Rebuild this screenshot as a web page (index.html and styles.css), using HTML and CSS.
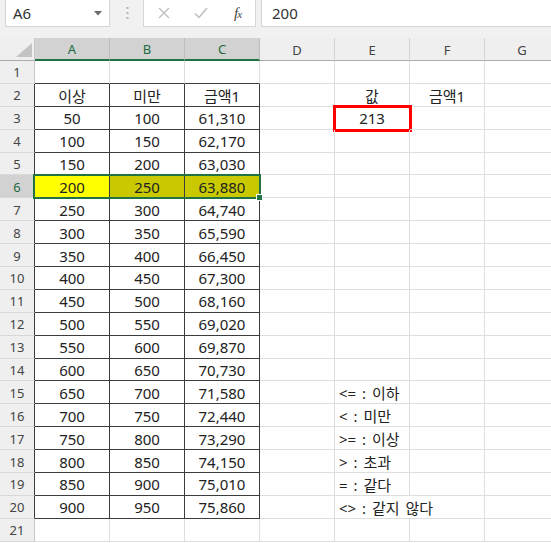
FILE: index.html
```html
<!DOCTYPE html>
<html lang="ko">
<head>
    <meta charset="UTF-8">
    <title>조건 조회</title>
    <link rel="stylesheet" href="styles.css">
</head>
<body>
    <div class="topbar">
        <div class="namebox">
            <span>A6</span>
            <svg class="caret" width="8" height="5" viewBox="0 0 8 5"><path d="M0 0h8L4 4.5z" fill="#6a6a6a"/></svg>
        </div>
        <div class="grip">
            <svg width="3" height="13" viewBox="0 0 3 13">
                <rect x="0.5" y="0" width="2" height="2" fill="#b4b4b4"/>
                <rect x="0.5" y="5" width="2" height="2" fill="#b4b4b4"/>
                <rect x="0.5" y="10" width="2" height="2" fill="#b4b4b4"/>
            </svg>
        </div>
        <div class="fxbox">
            <svg class="tool" width="12" height="12" viewBox="0 0 12 12"><path d="M1 1l10 10M11 1L1 11" stroke="#bcbcbc" stroke-width="1.2" fill="none"/></svg>
            <svg class="tool" width="14" height="12" viewBox="0 0 14 12"><path d="M1 6.5l4 4L13 1" stroke="#bcbcbc" stroke-width="1.4" fill="none"/></svg>
            <span class="fx">f<small>x</small></span>
        </div>
        <div class="formula">200</div>
    </div>

    <div class="sheet" id="sheet">
        <div class="selection"></div>
        <div class="handle"></div>
    </div>

    <script>
        const cols = ['A', 'B', 'C', 'D', 'E', 'F', 'G'];
        const rows = [
            ['이상', '미만', '금액1'],
            ['50', '100', '61,310'],
            ['100', '150', '62,170'],
            ['150', '200', '63,030'],
            ['200', '250', '63,880'],
            ['250', '300', '64,740'],
            ['300', '350', '65,590'],
            ['350', '400', '66,450'],
            ['400', '450', '67,300'],
            ['450', '500', '68,160'],
            ['500', '550', '69,020'],
            ['550', '600', '69,870'],
            ['600', '650', '70,730'],
            ['650', '700', '71,580'],
            ['700', '750', '72,440'],
            ['750', '800', '73,290'],
            ['800', '850', '74,150'],
            ['850', '900', '75,010'],
            ['900', '950', '75,860']
        ];
        const notes = {
            15: '<= : 이하',
            16: '< : 미만',
            17: '>= : 이상',
            18: '> : 초과',
            19: '= : 같다',
            20: '<> : 같지 않다'
        };

        const sheet = document.getElementById('sheet');

        function addCell(cls, text) {
            const div = document.createElement('div');
            div.className = cls;
            if (text) div.textContent = text;
            sheet.appendChild(div);
            return div;
        }

        addCell('corner', '').innerHTML =
            '<svg width="16" height="14" viewBox="0 0 16 14"><path d="M16 0V14H0z" fill="#c3c3c3"/></svg>';

        cols.forEach((c, i) => {
            addCell('colhead' + (i < 3 ? ' sel' : ''), c);
        });

        for (let r = 1; r <= 21; r++) {
            const inTable = r >= 2 && r <= 20;
            let head = 'rowhead';
            if (inTable) head += ' edge';
            if (r === 6) head += ' sel';
            addCell(head, String(r));

            cols.forEach((c, i) => {
                let cls = 'cell';
                let text = '';
                if (i < 3) {
                    if (r === 1) cls += ' top';
                    if (inTable) {
                        cls += ' boxed';
                        text = rows[r - 2][i];
                    }
                    if (r === 6) cls += i === 0 ? ' yellow' : ' olive';
                }
                if (c === 'E' && r === 2) text = '값';
                if (c === 'F' && r === 2) text = '금액1';
                if (c === 'E' && r === 3) {
                    cls += ' picked';
                    text = '213';
                }
                if (c === 'E' && notes[r]) {
                    cls += ' note';
                    text = notes[r];
                    if (r === 20) cls += ' spill';
                }
                addCell(cls, text);
            });
        }
    </script>
</body>
</html>
```

FILE: styles.css
```css
body {
    margin: 0;
    width: 551px;
    height: 543px;
    overflow: hidden;
    background: #fff;
    font-family: "Noto Sans", "Noto Sans CJK KR", sans-serif;
    color: #222;
}

.topbar {
    display: flex;
    height: 38px;
    padding-left: 5px;
    background: #f1f1f1;
    box-sizing: border-box;
}

.namebox,
.fxbox,
.formula {
    height: 27px;
    background: #fff;
    border: 1px solid #d6d6d6;
    border-top: none;
    box-sizing: border-box;
    display: flex;
    align-items: center;
}

.namebox {
    width: 105px;
    padding: 0 7px 0 7px;
    justify-content: space-between;
    font-size: 15px;
    color: #333;
}

.caret {
    margin-top: 1px;
}

.grip {
    width: 33px;
    height: 27px;
    display: flex;
    align-items: center;
    justify-content: center;
    padding-left: 1px;
    box-sizing: border-box;
}

.fxbox {
    width: 113px;
    padding: 0 10px 0 14px;
    gap: 24px;
}

.tool {
    flex: none;
}

.fx {
    margin-left: 2px;
    font-family: "Liberation Serif", serif;
    font-style: italic;
    font-size: 15px;
    color: #444;
    letter-spacing: -1px;
}

.fx small {
    font-size: 11px;
}

.formula {
    flex: 1;
    margin-left: 5px;
    padding-left: 10px;
    border-right: none;
    font-size: 15px;
    color: #333;
}

.sheet {
    position: relative;
    display: grid;
    grid-template-columns: 35px repeat(7, 75px);
    grid-template-rows: 23px repeat(21, 22.9px);
    width: 551px;
    overflow: hidden;
}

.sheet > div {
    box-sizing: border-box;
    white-space: nowrap;
}

.corner {
    background: #efefef;
    border-right: 1px solid #c8c8c8;
    border-bottom: 1px solid #ababab;
    display: flex;
    align-items: flex-end;
    justify-content: flex-end;
    padding: 0 2px 3px 0;
}

.colhead {
    background: #efefef;
    border-right: 1px solid #d4d4d4;
    border-bottom: 1px solid #ababab;
    display: flex;
    align-items: center;
    justify-content: center;
    font-size: 13px;
    color: #444;
    padding-top: 1px;
}

.colhead.sel {
    background: #d2d2d2;
    border-right-color: #bdbdbd;
    border-bottom: 2px solid #217346;
    color: #1e6b41;
}

.rowhead {
    background: #efefef;
    border-right: 1px solid #c8c8c8;
    border-bottom: 1px solid #d8d8d8;
    display: flex;
    align-items: center;
    justify-content: center;
    font-size: 13px;
    color: #444;
    padding-top: 1px;
}

.rowhead.edge {
    border-right-color: #3c3c3c;
}

.rowhead.sel {
    background: #d2d2d2;
    color: #1e6b41;
}

.cell {
    border-right: 1px solid #dedede;
    border-bottom: 1px solid #dedede;
    display: flex;
    align-items: center;
    justify-content: center;
    font-size: 15px;
    padding-top: 1px;
}

.cell.top {
    border-bottom-color: #3c3c3c;
}

.cell.boxed {
    border-right-color: #3c3c3c;
    border-bottom-color: #3c3c3c;
}

.cell.yellow {
    background: #ffff00;
}

.cell.olive {
    background: #c9c900;
}

.cell.picked {
    outline: 3px solid #ff0000;
    outline-offset: -1px;
}

.cell.note {
    justify-content: flex-start;
    padding-left: 4px;
    word-spacing: 2px;
}

.cell.spill {
    border-right: none;
    overflow: visible;
}

.selection {
    position: absolute;
    left: 33px;
    top: 136px;
    width: 228px;
    height: 25px;
    border: 2px solid #217346;
    box-sizing: border-box;
}

.handle {
    position: absolute;
    left: 256px;
    top: 156px;
    width: 7px;
    height: 7px;
    background: #217346;
    border: 1px solid #fff;
    box-sizing: border-box;
    z-index: 2;
}
```
